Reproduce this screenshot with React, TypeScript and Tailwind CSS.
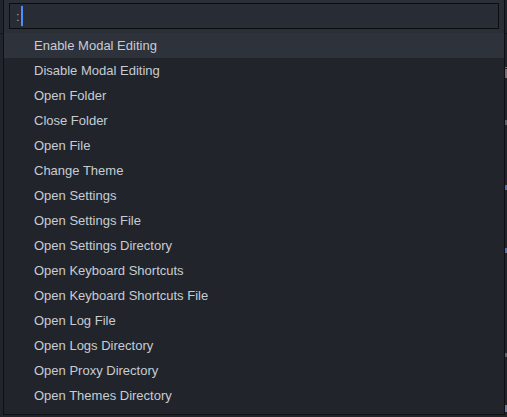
import React from 'react';

const commands = [
  'Enable Modal Editing',
  'Disable Modal Editing',
  'Open Folder',
  'Close Folder',
  'Open File',
  'Change Theme',
  'Open Settings',
  'Open Settings File',
  'Open Settings Directory',
  'Open Keyboard Shortcuts',
  'Open Keyboard Shortcuts File',
  'Open Log File',
  'Open Logs Directory',
  'Open Proxy Directory',
  'Open Themes Directory',
];

export default function App() {
  return (
    <div
      className="flex h-[417px] w-[507px] overflow-hidden bg-[#21252b]"
      style={{ fontFamily: '"Liberation Sans", Arial, sans-serif' }}
    >
      {/* editor behind, left edge */}
      <div className="flex w-[3px] flex-col">
        <div className="h-[33px] bg-[#21252b]" />
        <div className="h-px bg-[#14161a]" />
        <div className="flex-1 bg-[#21252b]" />
      </div>

      {/* palette */}
      <div className="flex h-[415px] w-[502px] flex-col border-x border-b border-[#0f1013] bg-[#21252b]">
        <div className="flex h-[33px] bg-[#2a2e36] px-[5px] pt-[3px]">
          <div className="flex h-[26px] w-full items-center border border-[#0c0d10] bg-[#282c34] pl-[6px]">
            <span className="text-[13px] leading-none text-[#9aa0aa]">:</span>
            <span className="ml-[1px] h-[20px] w-[2px] bg-[#528bff]" />
          </div>
        </div>
        <div className="flex flex-col">
          {commands.map((c, i) => (
            <div
              key={c}
              className={`flex h-[25px] items-center pl-[30px] text-[13px] text-[#c8ccd3] ${
                i === 0 ? 'bg-[#2e323b]' : ''
              }`}
            >
              {c}
            </div>
          ))}
        </div>
      </div>

      {/* editor behind, right edge */}
      <div className="flex w-[2px] flex-col bg-[#21252b]">
        <div className="h-[33px]" />
        <div className="h-px bg-[#14161a]" />
        <div className="mt-[33px] h-px bg-[#6b6f78]" />
        <div className="mt-[1px] h-[9px] bg-[#7a6a72]" />
        <div className="mt-[42px] h-[5px] bg-[#5d616a]" />
        <div className="mt-[60px] h-[5px] bg-[#5a6fa8]" />
        <div className="mt-[58px] h-[5px] bg-[#5a6fa8]" />
        <div className="mt-[100px] h-[4px] bg-[#5d616a]" />
        <div className="mt-[48px] h-[7px] bg-[#6c7a9a]" />
      </div>
    </div>
  );
}
